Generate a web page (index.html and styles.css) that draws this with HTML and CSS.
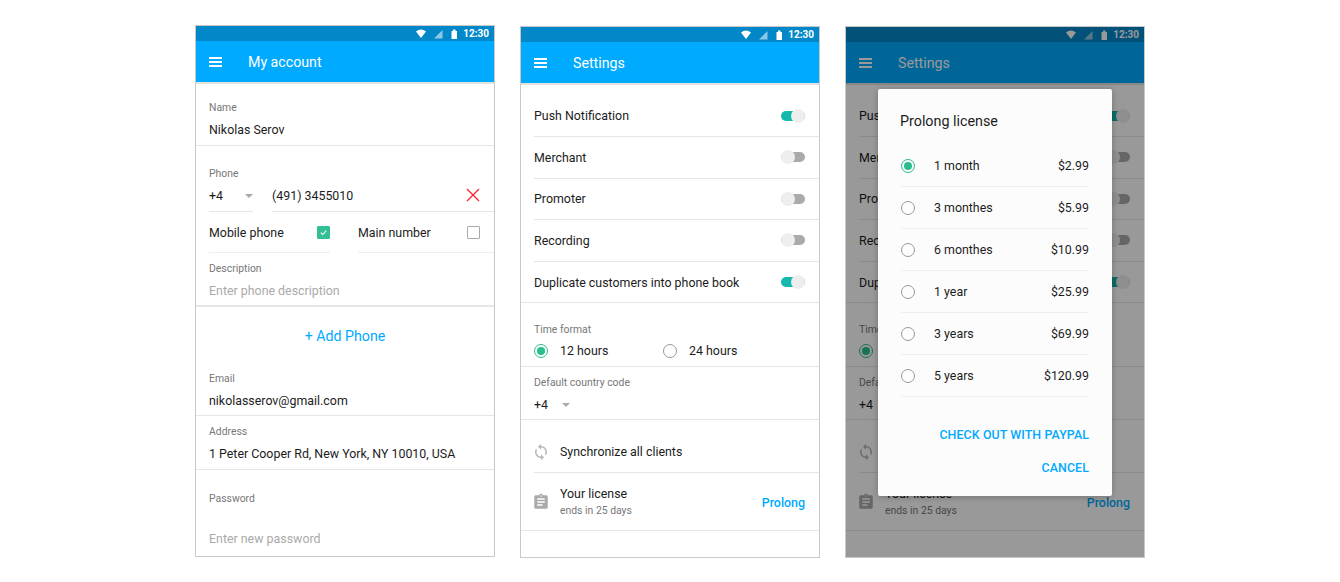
FILE: index.html
```html
<!DOCTYPE html>
<html lang="en">
<head>
    <meta charset="UTF-8">
    <title>Account and settings screens</title>
    <link rel="stylesheet" href="styles.css">
</head>
<body>
    <svg class="icon-defs" xmlns="http://www.w3.org/2000/svg">
        <symbol id="i-sync" viewBox="0 0 24 24"><path d="M12 4V1L8 5l4 4V6c3.31 0 6 2.69 6 6 0 1.01-.25 1.97-.7 2.8l1.46 1.46C19.54 15.03 20 13.57 20 12c0-4.42-3.58-8-8-8zm0 14c-3.31 0-6-2.69-6-6 0-1.01.25-1.97.7-2.8L5.24 7.74C4.46 8.97 4 10.43 4 12c0 4.42 3.58 8 8 8v3l4-4-4-4v3z"/></symbol>
        <symbol id="i-license" viewBox="0 0 24 24"><path d="M19 3h-4.18C14.4 1.84 13.3 1 12 1c-1.3 0-2.4.84-2.82 2H5c-1.1 0-2 .9-2 2v14c0 1.1.9 2 2 2h14c1.1 0 2-.9 2-2V5c0-1.1-.9-2-2-2zm-7 0c.55 0 1 .45 1 1s-.45 1-1 1-1-.45-1-1 .45-1 1-1zm2 14H7v-2h7v2zm3-4H7v-2h10v2zm0-4H7V7h10v2z"/></symbol>
        <symbol id="i-status" viewBox="0 0 42 12">
            <path d="M0 3.500Q5-.500 10 3.500L5 10z" fill="#fff"/>
            <path d="M18 10.500 26.500 2v8.500z" fill="#fff" opacity=".55"/>
            <path d="M35.500 3h1.500V1.500h2.500V3H41v8h-5.500z" fill="#fff"/>
        </symbol>
    </svg>

    <!-- My account -->
    <section class="phone">
        <div class="status-bar">
            <svg class="status-icons"><use href="#i-status"/></svg>
            <span class="clock">12:30</span>
        </div>
        <header class="app-bar">
            <span class="burger"><i></i><i></i><i></i></span>
            <h1>My account</h1>
        </header>
        <div class="field field-name">
            <div class="label">Name</div>
            <div class="value">Nikolas Serov</div>
        </div>
        <div class="field field-phone">
            <div class="label">Phone</div>
            <div class="phone-row">
                <div class="code-select"><span class="value-text">+4</span><span class="caret"></span></div>
                <div class="number">
                    <span class="value-text">(491) 3455010</span>
                    <svg class="clear-icon" viewBox="0 0 14 14"><path d="M1 1l12 12M13 1 1 13"/></svg>
                </div>
            </div>
        </div>
        <div class="check-row">
            <div class="check-cell">
                <span>Mobile phone</span>
                <span class="checkbox checked"><svg viewBox="0 0 14 14"><path d="M3.500 7.200l2.500 2.400 4.500-5"/></svg></span>
            </div>
            <div class="check-cell check-cell-last">
                <span>Main number</span>
                <span class="checkbox"></span>
            </div>
        </div>
        <div class="field field-desc">
            <div class="label">Description</div>
            <div class="value placeholder">Enter phone description</div>
        </div>
        <div class="add-phone">+ Add Phone</div>
        <div class="field field-email">
            <div class="label">Email</div>
            <div class="value">nikolasserov@gmail.com</div>
        </div>
        <div class="field field-address">
            <div class="label">Address</div>
            <div class="value">1 Peter Cooper Rd, New York, NY 10010, USA</div>
        </div>
        <div class="field field-password">
            <div class="label">Password</div>
            <div class="value placeholder">Enter new password</div>
        </div>
    </section>

    <!-- Settings -->
    <section class="phone phone-low">
        <div class="status-bar">
            <svg class="status-icons"><use href="#i-status"/></svg>
            <span class="clock">12:30</span>
        </div>
        <header class="app-bar">
            <span class="burger"><i></i><i></i><i></i></span>
            <h1>Settings</h1>
        </header>
        <div class="toggles">
            <div class="row"><span>Push Notification</span><span class="toggle on"></span></div>
            <div class="row"><span>Merchant</span><span class="toggle"></span></div>
            <div class="row"><span>Promoter</span><span class="toggle"></span></div>
            <div class="row"><span>Recording</span><span class="toggle"></span></div>
            <div class="row"><span>Duplicate customers into phone book</span><span class="toggle on"></span></div>
        </div>
        <div class="field field-time">
            <div class="label">Time format</div>
            <div class="radio-line">
                <span class="radio-opt"><span class="radio on"></span>12 hours</span>
                <span class="radio-opt"><span class="radio"></span>24 hours</span>
            </div>
        </div>
        <div class="field field-country">
            <div class="label">Default country code</div>
            <div class="country-line"><span class="value-text">+4</span><span class="caret"></span></div>
        </div>
        <div class="row-sync">
            <svg class="row-icon"><use href="#i-sync"/></svg>
            <span>Synchronize all clients</span>
        </div>
        <div class="row-license">
            <svg class="row-icon"><use href="#i-license"/></svg>
            <div class="license-text">
                <div>Your license</div>
                <div class="license-sub">ends in 25 days</div>
            </div>
            <span class="prolong">Prolong</span>
        </div>
    </section>

    <!-- Settings with the dialog open -->
    <section class="phone phone-low">
        <div class="status-bar">
            <svg class="status-icons"><use href="#i-status"/></svg>
            <span class="clock">12:30</span>
        </div>
        <header class="app-bar">
            <span class="burger"><i></i><i></i><i></i></span>
            <h1>Settings</h1>
        </header>
        <div class="toggles">
            <div class="row"><span>Push Notification</span><span class="toggle on"></span></div>
            <div class="row"><span>Merchant</span><span class="toggle"></span></div>
            <div class="row"><span>Promoter</span><span class="toggle"></span></div>
            <div class="row"><span>Recording</span><span class="toggle"></span></div>
            <div class="row"><span>Duplicate customers into phone book</span><span class="toggle on"></span></div>
        </div>
        <div class="field field-time">
            <div class="label">Time format</div>
            <div class="radio-line">
                <span class="radio-opt"><span class="radio on"></span>12 hours</span>
                <span class="radio-opt"><span class="radio"></span>24 hours</span>
            </div>
        </div>
        <div class="field field-country">
            <div class="label">Default country code</div>
            <div class="country-line"><span class="value-text">+4</span><span class="caret"></span></div>
        </div>
        <div class="row-sync">
            <svg class="row-icon"><use href="#i-sync"/></svg>
            <span>Synchronize all clients</span>
        </div>
        <div class="row-license">
            <svg class="row-icon"><use href="#i-license"/></svg>
            <div class="license-text">
                <div>Your license</div>
                <div class="license-sub">ends in 25 days</div>
            </div>
            <span class="prolong">Prolong</span>
        </div>

        <div class="scrim"></div>
        <div class="dialog">
            <h2>Prolong license</h2>
            <div class="plan"><span class="radio on"></span><span class="plan-name">1 month</span><span>$2.99</span></div>
            <div class="plan"><span class="radio"></span><span class="plan-name">3 monthes</span><span>$5.99</span></div>
            <div class="plan"><span class="radio"></span><span class="plan-name">6 monthes</span><span>$10.99</span></div>
            <div class="plan"><span class="radio"></span><span class="plan-name">1 year</span><span>$25.99</span></div>
            <div class="plan"><span class="radio"></span><span class="plan-name">3 years</span><span>$69.99</span></div>
            <div class="plan"><span class="radio"></span><span class="plan-name">5 years</span><span>$120.99</span></div>
            <div class="dialog-action action-paypal">CHECK OUT WITH PAYPAL</div>
            <div class="dialog-action">CANCEL</div>
        </div>
    </section>
</body>
</html>
```

FILE: styles.css
```css
/* Three phone screens side by side */
body {
    margin: 0;
    height: 582px;
    padding-top: 25px;
    box-sizing: border-box;
    overflow: hidden;
    display: flex;
    justify-content: center;
    gap: 25px;
    background-color: #fff;
    font-family: Roboto, "Liberation Sans", sans-serif;
    font-size: 12.4px;
    color: #1c1c1c;
}

.icon-defs {
    width: 0;
    height: 0;
    position: absolute;
}

.phone {
    position: relative;
    width: 300px;
    height: 532px;
    box-sizing: border-box;
    border: 1px solid #c8c8c8;
    background-color: #fff;
    overflow: hidden;
    flex: none;
}

.phone-low {
    margin-top: 1px;
}

/* Status bar and app bar */
.status-bar {
    height: 15px;
    background-color: #0288c9;
    display: flex;
    align-items: center;
    justify-content: flex-end;
    padding-right: 5px;
}

.status-icons {
    width: 42px;
    height: 12px;
    margin-right: 5px;
}

.clock {
    color: #fff;
    font-size: 10px;
    font-weight: 700;
}

.app-bar {
    height: 41px;
    background-color: #00aaff;
    border-bottom: 2px solid #e2e2e2;
    display: flex;
    align-items: center;
    padding-left: 13px;
}

.app-bar h1 {
    margin: 0 0 0 26px;
    font-size: 14.200px;
    font-weight: 400;
    color: #fff;
}

.burger {
    width: 13px;
    display: flex;
    flex-direction: column;
    gap: 2px;
}

.burger i {
    display: block;
    height: 2px;
    background-color: #fff;
}

/* Form fields */
.field {
    padding: 7px 0 4px 13px;
    border-bottom: 1px solid #e6e6e6;
}

.label {
    height: 18px;
    line-height: 18px;
    margin-bottom: 2px;
    font-size: 10.400px;
    color: #777;
}

.value {
    height: 22px;
    line-height: 22px;
}

.placeholder {
    color: #aaa;
}

.field-name {
    padding-top: 15px;
}

.field-phone {
    padding: 19px 0 0 13px;
    border-bottom: 0;
}

.phone-row {
    display: flex;
    gap: 19px;
    line-height: 22px;
}

.code-select,
.number {
    height: 26px;
    border-bottom: 1px solid #e6e6e6;
    display: flex;
    align-items: flex-start;
}

.code-select {
    width: 44px;
    justify-content: space-between;
}

.number {
    flex: 1;
    justify-content: space-between;
    padding-right: 14px;
}

.clear-icon {
    width: 14px;
    height: 14px;
    margin-top: 3px;
    fill: none;
    stroke: #f5222d;
    stroke-width: 1.300;
}

.caret {
    width: 0;
    height: 0;
    margin: 9px 0 0 0;
    border-left: 4px solid transparent;
    border-right: 4px solid transparent;
    border-top: 4px solid #aaa;
}

.check-row {
    display: flex;
    gap: 28px;
    padding-left: 13px;
}

.check-cell {
    width: 121px;
    height: 40px;
    border-bottom: 1px solid #eee;
    display: flex;
    align-items: center;
    justify-content: space-between;
}

.check-cell-last {
    flex: 1;
    padding-right: 14px;
}

.checkbox {
    width: 11px;
    height: 11px;
    border: 1.500px solid #aaa;
    border-radius: 1px;
}

.checkbox.checked {
    background-color: #33bf95;
    border-color: #33bf95;
}

.checkbox svg {
    display: block;
    width: 11px;
    height: 11px;
    fill: none;
    stroke: #fff;
    stroke-width: 1.300;
}

.field-desc {
    border-bottom-width: 2px;
    padding-bottom: 3px;
}

.add-phone {
    height: 56px;
    line-height: 58px;
    text-align: center;
    font-size: 14.200px;
    color: #00aaff;
}

.field-email {
    padding-bottom: 3px;
}

.field-password {
    padding-top: 20px;
    border-bottom: 0;
}

.field-password .label {
    margin-bottom: 20px;
}

/* Settings rows */
.toggles {
    padding: 10.400px 0 0 13px;
}

.row {
    height: 40.600px;
    border-bottom: 1px solid #e6e6e6;
    display: flex;
    align-items: center;
    justify-content: space-between;
    padding-right: 14px;
}

.row:last-child {
    margin-left: -13px;
    padding-left: 13px;
}

.toggle {
    position: relative;
    width: 24px;
    height: 10px;
    border-radius: 5px;
    background-color: #aaa;
}

.toggle::after {
    content: "";
    position: absolute;
    left: 0;
    top: -2px;
    width: 14px;
    height: 14px;
    border-radius: 50%;
    background-color: #eee;
}

.toggle.on {
    background-color: #14b8ac;
}

.toggle.on::after {
    left: 10px;
}

.field-time {
    padding-top: 17.600px;
    padding-bottom: 4px;
}

.field-time .label {
    margin-bottom: 1px;
}

.radio-line {
    display: flex;
    height: 22px;
    align-items: center;
}

.radio-opt {
    width: 129px;
    display: flex;
    align-items: center;
    gap: 12px;
}

.radio {
    width: 12px;
    height: 12px;
    border: 1px solid #999;
    border-radius: 50%;
    flex: none;
    display: flex;
    align-items: center;
    justify-content: center;
}

.radio.on {
    border-color: #2bbd8f;
}

.radio.on::after {
    content: "";
    width: 8px;
    height: 8px;
    border-radius: 50%;
    background-color: #2bbd8f;
}

.field-country {
    padding-bottom: 3px;
}

.country-line {
    height: 22px;
    display: flex;
    gap: 14px;
    line-height: 22px;
}

.value-text {
    display: block;
}

.row-icon {
    width: 18px;
    height: 18px;
    margin-left: -2px;
    fill: #aaa;
    flex: none;
}

.row-sync,
.row-license {
    display: flex;
    align-items: center;
    gap: 10px;
    border-bottom: 1px solid #e6e6e6;
}

.row-sync {
    height: 40px;
    padding-top: 12px;
    margin-left: 13px;
}

.row-sync .row-icon {
    fill: #b8b8b8;
}

.row-license {
    height: 55px;
    padding: 2px 14px 0 13px;
}

.license-text {
    flex: 1;
    line-height: 17px;
}

.license-sub {
    font-size: 10.400px;
    color: #777;
}

.prolong {
    font-weight: 500;
    color: #00aaff;
}

/* Dialog over the third screen */
.scrim {
    position: absolute;
    inset: 0;
    background-color: rgba(0, 0, 0, 0.4);
}

.dialog {
    position: absolute;
    left: 32px;
    top: 62px;
    width: 234px;
    height: 407px;
    box-sizing: border-box;
    padding: 0 23px;
    background-color: #fcfcfd;
    border-radius: 2px;
    box-shadow: 0 1px 6px rgba(0, 0, 0, 0.25);
}

.dialog h2 {
    margin: 0 0 0 -1px;
    height: 56px;
    padding-top: 22px;
    box-sizing: border-box;
    font-size: 14.300px;
    line-height: 20px;
    font-weight: 400;
    color: #1c1c1c;
}

.plan {
    height: 41px;
    border-bottom: 1px solid #eee;
    display: flex;
    align-items: center;
}

.plan-name {
    flex: 1;
    margin-left: 19px;
}

.dialog-action {
    height: 33px;
    line-height: 33px;
    text-align: right;
    font-size: 12.400px;
    font-weight: 500;
    letter-spacing: 0.1px;
    color: #00aaff;
}

.action-paypal {
    margin-top: 21px;
}
```
